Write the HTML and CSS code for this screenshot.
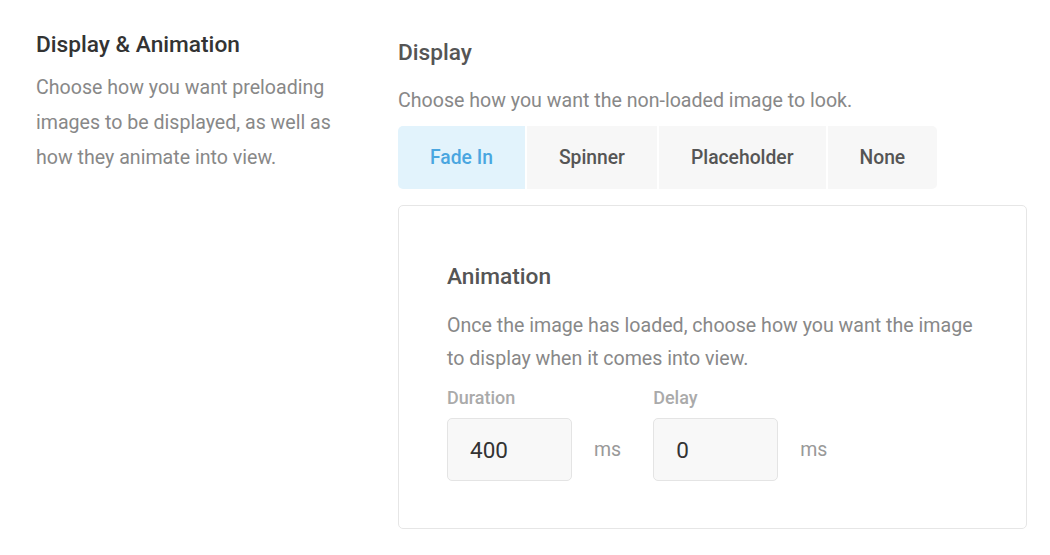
FILE: index.html
```html
<!DOCTYPE html>
<html lang="en">
<head>
<meta charset="UTF-8" />
<meta name="viewport" content="width=device-width, initial-scale=1" />
<title>Display &amp; Animation</title>
<link rel="stylesheet" href="styles.css">
</head>
<body>

<div class="settings">
  <div class="intro">
    <h2>Display &amp; Animation</h2>
    <p>Choose how you want preloading images to be displayed, as well as how they animate into view.</p>
  </div>

  <div class="options">
    <h3>Display</h3>
    <p class="hint">Choose how you want the non-loaded image to look.</p>
    <div class="tabs">
      <button class="tab active">Fade In</button>
      <button class="tab">Spinner</button>
      <button class="tab">Placeholder</button>
      <button class="tab">None</button>
    </div>

    <div class="panel">
      <h3>Animation</h3>
      <p class="hint">Once the image has loaded, choose how you want the image to display when it comes into view.</p>
      <div class="fields">
        <div class="field">
          <label for="duration">Duration</label>
          <div class="field-row">
            <input id="duration" type="text" value="400">
            <span class="unit">ms</span>
          </div>
        </div>
        <div class="field">
          <label for="delay">Delay</label>
          <div class="field-row">
            <input id="delay" type="text" value="0">
            <span class="unit">ms</span>
          </div>
        </div>
      </div>
    </div>
  </div>
</div>

</body>
</html>
```

FILE: styles.css
```css
* {
  box-sizing: border-box;
}
body {
  margin: 0;
  background: #fff;
  font-family: Roboto, 'Liberation Sans', sans-serif;
  color: #555;
}
.settings {
  display: flex;
  padding: 31px 23px 0 36px;
}
.intro {
  width: 300px;
  flex-shrink: 0;
}
.intro h2 {
  margin: 0;
  font-size: 22.7px;
  line-height: 28px;
  font-weight: 500;
  color: #333;
}
.intro p {
  margin: 11px 0 0;
  font-size: 19.6px;
  line-height: 35px;
  color: #888;
}
.options {
  flex: 1;
  margin-left: 62px;
  padding-top: 8px;
}
.options h3 {
  margin: 0;
  font-size: 22.7px;
  line-height: 28px;
  font-weight: 500;
  color: #555;
}
.hint {
  margin: 19px 0 0;
  font-size: 19.6px;
  line-height: 30px;
  color: #888;
}
.tabs {
  display: flex;
  gap: 2px;
  margin-top: 10px;
}
.tab {
  height: 63px;
  padding: 0 32px;
  border: none;
  background: #f7f7f7;
  font-family: inherit;
  font-size: 19.3px;
  font-weight: 500;
  color: #555;
  cursor: pointer;
}
.tab:first-child {
  border-radius: 5px 0 0 5px;
}
.tab:last-child {
  border-radius: 0 5px 5px 0;
}
.tab.active {
  background: #e2f3fc;
  color: #4aa6e0;
}
.panel {
  margin-top: 16px;
  border: 1px solid #e6e6e6;
  border-radius: 5px;
  padding: 57px 48px 47px;
}
.panel .hint {
  margin-top: 18px;
  line-height: 33px;
}
.fields {
  display: flex;
  gap: 32px;
  margin-top: 11px;
}
.field label {
  display: block;
  font-size: 18px;
  line-height: 24px;
  font-weight: 500;
  color: #aaa;
}
.field-row {
  display: flex;
  align-items: center;
  gap: 22px;
  margin-top: 8px;
}
.field input {
  width: 125px;
  height: 63px;
  padding: 0 22px;
  border: 1px solid #e4e4e4;
  border-radius: 5px;
  background: #f8f8f8;
  font-family: inherit;
  font-size: 22.5px;
  color: #333;
}
.unit {
  font-size: 19.5px;
  color: #999;
}
```
